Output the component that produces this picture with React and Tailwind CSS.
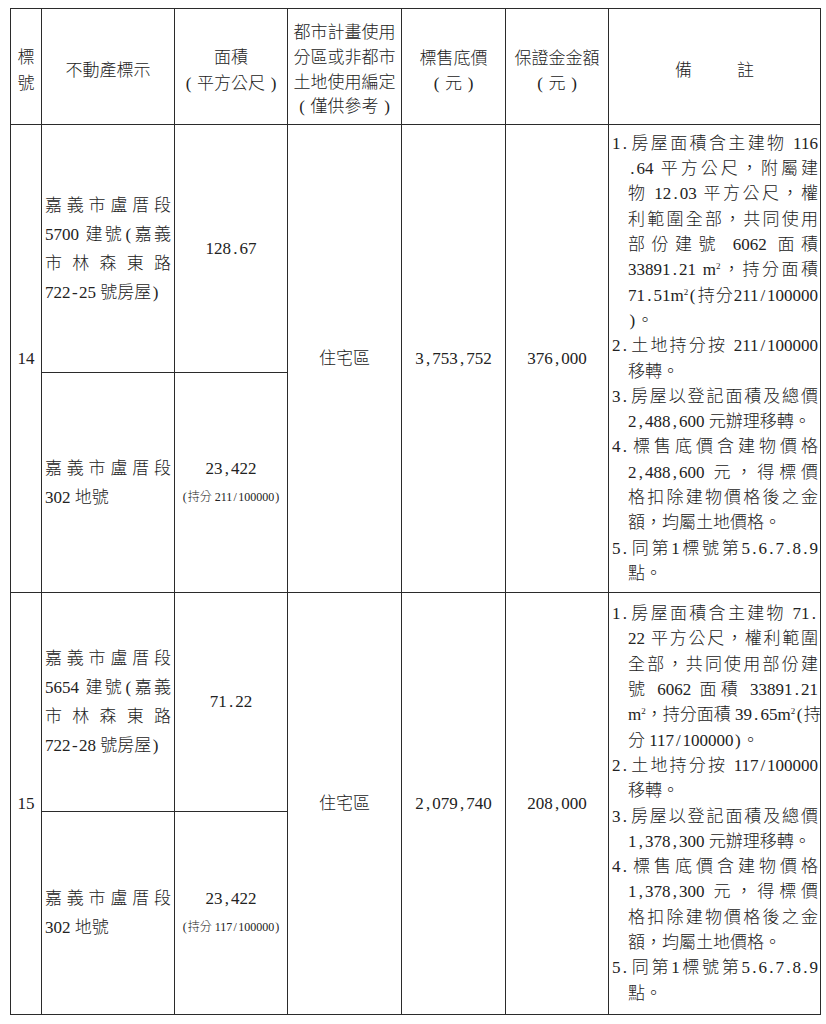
import React from "react";

const SEP = /([,.\/()\-²])/;
const PCLS = {
  ",": "mx-[0.125em]",
  ".": "mx-[0.125em]",
  "/": "mx-[0.11em]",
  "(": "mx-[0.083em]",
  ")": "mx-[0.083em]",
  "-": "mx-[0.083em]",
};

function T({ s }) {
  const parts = s.split(SEP).filter((p) => p !== "");
  return parts.map((p, i) => {
    if (p === "²")
      return (
        <span key={i} className="text-[9px] leading-none align-[6px]">
          2
        </span>
      );
    if (PCLS[p])
      return (
        <span key={i} className={PCLS[p]}>
          {p}
        </span>
      );
    return <React.Fragment key={i}>{p}</React.Fragment>;
  });
}

function L({ s, j, ind }) {
  return (
    <div
      className={`whitespace-nowrap ${ind ? "pl-[16px]" : ""} ${
        j ? "text-justify [text-align-last:justify]" : "text-left"
      }`}
    >
      <T s={s} />
    </div>
  );
}

function FW({ children }) {
  return (
    <div>
      <span className="inline-block w-[17px] text-center">(</span>
      {children}
      <span className="inline-block w-[17px] text-center">)</span>
    </div>
  );
}

const R14 = [
  ["1.房屋面積含主建物 116", 1, 0],
  [".64 平方公尺，附屬建", 1, 1],
  ["物 12.03 平方公尺，權", 1, 1],
  ["利範圍全部，共同使用", 1, 1],
  ["部份建號 6062 面積", 1, 1],
  ["33891.21 m²，持分面積", 1, 1],
  ["71.51m²(持分211/100000", 1, 1],
  [")。", 0, 1],
  ["2.土地持分按 211/100000", 1, 0],
  ["移轉。", 0, 1],
  ["3.房屋以登記面積及總價", 1, 0],
  ["2,488,600 元辦理移轉。", 0, 1],
  ["4.標售底價含建物價格", 1, 0],
  ["2,488,600 元，得標價", 1, 1],
  ["格扣除建物價格後之金", 1, 1],
  ["額，均屬土地價格。", 0, 1],
  ["5.同第1標號第5.6.7.8.9", 1, 0],
  ["點。", 0, 1],
];

const R15 = [
  ["1.房屋面積含主建物 71.", 1, 0],
  ["22 平方公尺，權利範圍", 1, 1],
  ["全部，共同使用部份建", 1, 1],
  ["號 6062 面積 33891.21", 1, 1],
  ["m²，持分面積 39.65m²(持", 1, 1],
  ["分 117/100000)。", 0, 1],
  ["2.土地持分按 117/100000", 1, 0],
  ["移轉。", 0, 1],
  ["3.房屋以登記面積及總價", 1, 0],
  ["1,378,300 元辦理移轉。", 0, 1],
  ["4.標售底價含建物價格", 1, 0],
  ["1,378,300 元，得標價", 1, 1],
  ["格扣除建物價格後之金", 1, 1],
  ["額，均屬土地價格。", 0, 1],
  ["5.同第1標號第5.6.7.8.9", 1, 0],
  ["點。", 0, 1],
];

const C = "border border-[#2b2b2b] p-0 align-middle";
const HC = "border border-[#2b2b2b] p-0 pt-[8px] align-middle text-center";

function Block({ no, bldg, area, price, dep, remarks }) {
  return (
    <>
      <tr className={no === "14" ? "h-[248px]" : "h-[219px]"}>
        <td rowSpan={2} className={`${C} text-center`}>
          <T s={no} />
        </td>
        <td className={`${C} px-[3px] leading-[29px]`}>
          <L s="嘉義市盧厝段" j={1} />
          <L s={`${bldg} 建號(嘉義`} j={1} />
          <L s="市林森東路" j={1} />
          <L s={`${area === "128.67" ? "722-25" : "722-28"} 號房屋)`} j={0} />
        </td>
        <td className={`${C} text-center`}>
          <T s={area} />
        </td>
        <td rowSpan={2} className={`${C} text-center`}>
          住宅區
        </td>
        <td rowSpan={2} className={`${C} text-center`}>
          <T s={price} />
        </td>
        <td rowSpan={2} className={`${C} text-center`}>
          <T s={dep} />
        </td>
        <td rowSpan={2} className={`${C} pl-[3px] pr-[2px] leading-[25.3px]`}>
          {remarks.map(([s, j, ind], i) => (
            <L key={i} s={s} j={j} ind={ind} />
          ))}
        </td>
      </tr>
      <tr className={no === "14" ? "h-[220px]" : "h-[203px]"}>
        <td className={`${C} px-[3px] leading-[29px]`}>
          <L s="嘉義市盧厝段" j={1} />
          <L s="302 地號" j={0} />
        </td>
        <td className={`${C} text-center leading-[29px]`}>
          <div>
            <T s="23,422" />
          </div>
          <div className="text-[12px]">
            <T s={`(持分 ${no === "14" ? "211" : "117"}/100000)`} />
          </div>
        </td>
      </tr>
    </>
  );
}

export default function App() {
  return (
    <div className="w-[826px] h-[1024px] overflow-hidden bg-white pt-[8px] pl-[10px] text-[17px] font-light text-[#222] font-['Liberation_Serif','Noto_Sans_CJK_TC',serif]">
      <table className="border-collapse table-fixed w-[810px]">
        <colgroup>
          <col className="w-[31px]" />
          <col className="w-[133px]" />
          <col className="w-[113px]" />
          <col className="w-[114px]" />
          <col className="w-[104px]" />
          <col className="w-[103px]" />
          <col className="w-[212px]" />
        </colgroup>
        <tbody>
          <tr className="h-[116px]">
            <td className={`${HC} leading-[26px]`}>
              <div>標</div>
              <div>號</div>
            </td>
            <td className={HC}>不動產標示</td>
            <td className={`${HC} leading-[26px]`}>
              <div>面積</div>
              <FW>平方公尺</FW>
            </td>
            <td className={`${HC} leading-[24.7px]`}>
              <div>都市計畫使用</div>
              <div>分區或非都市</div>
              <div>土地使用編定</div>
              <FW>僅供參考</FW>
            </td>
            <td className={`${HC} leading-[25px]`}>
              <div>標售底價</div>
              <FW>元</FW>
            </td>
            <td className={`${HC} leading-[25px]`}>
              <div>保證金金額</div>
              <FW>元</FW>
            </td>
            <td className={HC}>
              <span>備</span>
              <span className="ml-[45px]">註</span>
            </td>
          </tr>
          <Block
            no="14"
            bldg="5700"
            area="128.67"
            price="3,753,752"
            dep="376,000"
            remarks={R14}
          />
          <Block
            no="15"
            bldg="5654"
            area="71.22"
            price="2,079,740"
            dep="208,000"
            remarks={R15}
          />
        </tbody>
      </table>
    </div>
  );
}
